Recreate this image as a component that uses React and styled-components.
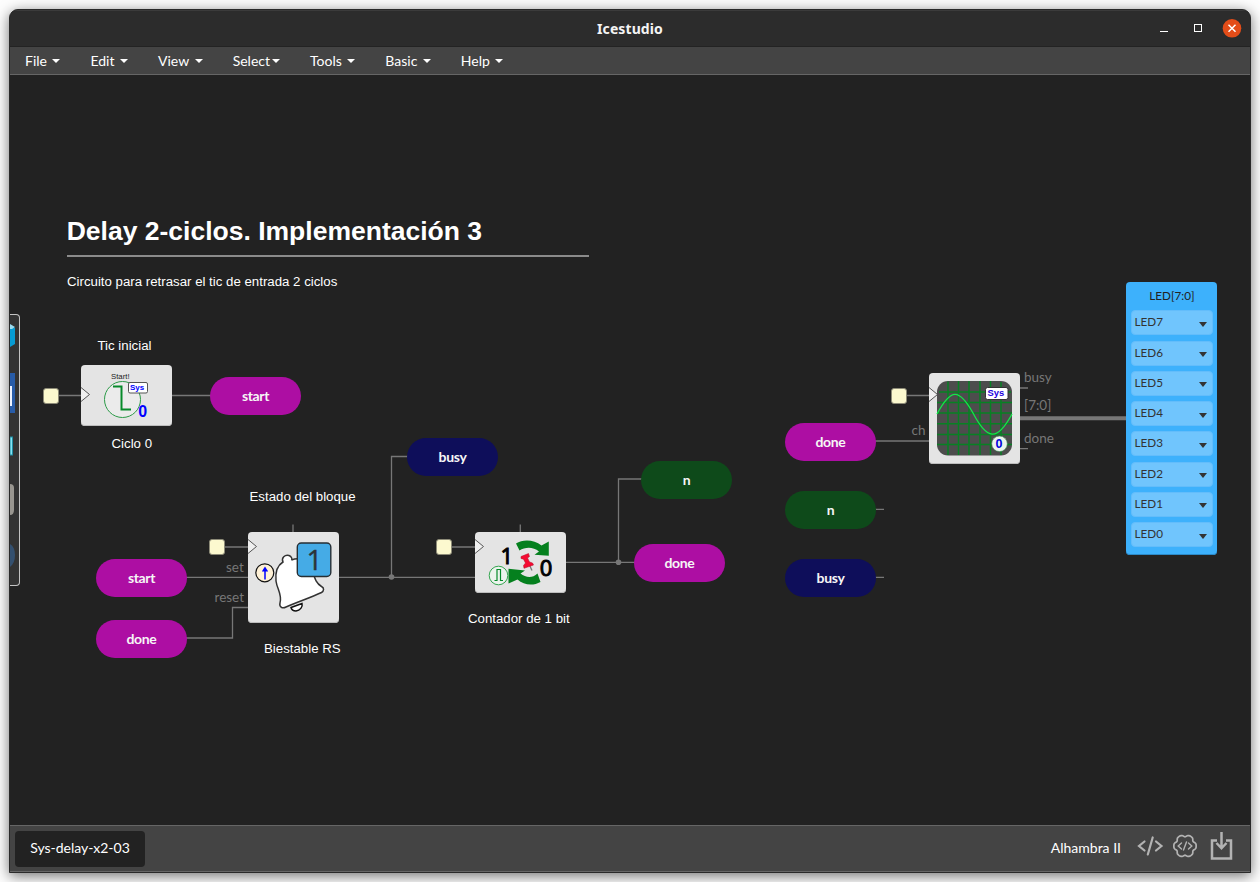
import React from "react";
import styled, { createGlobalStyle } from "styled-components";

const GlobalStyle = createGlobalStyle`
  * { box-sizing: border-box; }
  body { margin: 0; background: #fff; overflow: hidden; font-family: Lato, sans-serif; }
`;

const Desktop = styled.div`
  height: 882px;
  padding: 9px;
  background: #fdfdfd;
`;

const Window = styled.div`
  width: 1242px;
  height: 864px;
  display: flex;
  flex-direction: column;
  border: 1px solid #2a2a2a;
  border-radius: 9px 9px 0 0;
  overflow: hidden;
  background: #222;
  box-shadow: 0 3px 14px rgba(0, 0, 0, 0.55);
`;

const TitleBar = styled.header`
  height: 37px;
  flex: none;
  display: grid;
  grid-template-columns: 1fr auto 1fr;
  align-items: center;
  background: #2c2c2c;
  border-top: 1px solid #3b3b3b;
  border-bottom: 1px solid #232323;
`;

const Title = styled.h1`
  grid-column: 2;
  margin: 0;
  font: 700 14px/20px "Noto Sans", sans-serif;
  letter-spacing: 0.1px;
  color: #f4f4f4;
`;

const WindowControls = styled.div`
  display: flex;
  justify-content: flex-end;
  padding-right: 8px;
`;

const MenuBar = styled.nav`
  height: 28px;
  flex: none;
  display: flex;
  background: #444;
  border-bottom: 1px solid #666;
`;

const MenuItem = styled.div`
  display: flex;
  align-items: center;
  padding: 0 15px;
  font-size: 14px;
  color: #fff;
`;

const Caret = styled.span`
  margin-top: 1px;
  margin-left: ${(p) => (p.$tight ? 2 : 5.5)}px;
  border-top: 4px solid #fff;
  border-left: 4px solid transparent;
  border-right: 4px solid transparent;
`;

const Canvas = styled.main`
  flex: 1;
  position: relative;
  overflow: hidden;
  background: #222;
`;

const Scene = styled.div`
  position: absolute;
  left: -10px;
  top: -75px;
  width: 1260px;
  height: 882px;
`;

const Wires = styled.svg`
  position: absolute;
  left: 0;
  top: 0;
`;

const Placed = styled.div`
  position: absolute;
  left: ${(p) => p.$x}px;
  top: ${(p) => p.$y}px;
`;

const Heading = styled(Placed)`
  width: 522px;
  height: 43px;
  border-bottom: 2px solid #8b8b8b;
  font: 700 26.5px/34px "Liberation Sans", sans-serif;
  color: #fff;
  white-space: nowrap;
`;

const Note = styled(Placed)`
  font: 13.25px/16px "Liberation Sans", sans-serif;
  color: #fff;
  white-space: nowrap;
`;

const PILL_COLORS = { fuchsia: "#ad0ea3", navy: "#0e0e5a", green: "#0e4a1a" };

const Pill = styled(Placed)`
  width: 91px;
  height: 38px;
  display: flex;
  align-items: center;
  justify-content: center;
  padding-bottom: 2px;
  border-radius: 19px;
  background: ${(p) => PILL_COLORS[p.$color]};
  color: #f6f6f6;
  font-size: 14px;
  font-weight: 700;
  letter-spacing: -0.35px;
`;

const ClockSource = styled(Placed)`
  width: 16px;
  height: 16px;
  border: 1px solid #8d8b78;
  border-radius: 3px;
  background: #fcf9cf;
`;

const Block = styled(Placed)`
  width: 91px;
  height: ${(p) => p.$h}px;
  border-radius: 4px;
  background: #e4e4e4;
  box-shadow: inset 0 -1px 0 #bdbdbd;
  overflow: hidden;
  svg { display: block; }
`;

const PortLabel = styled(Placed)`
  font-size: 13.5px;
  line-height: 16px;
  color: #777;
  white-space: nowrap;
`;

const LedPanel = styled(Placed)`
  width: 91px;
  height: 272.5px;
  display: flex;
  flex-direction: column;
  gap: 5.25px;
  padding: 0 4px 0 5px;
  border-radius: 4px;
  background: #3db1fc;
  box-shadow: inset 0 -1px 0 #2c8ac8;
  color: #333;
`;

const LedTitle = styled.div`
  height: 23px;
  line-height: 27px;
  font-size: 11.7px;
  text-align: center;
  color: #222;
`;

const LedSelect = styled.div`
  height: 25px;
  flex: none;
  display: flex;
  justify-content: space-between;
  padding: 0 5.5px 0 2.5px;
  border: 1px solid #63bdfb;
  border-radius: 4px;
  background: #70c5fd;
  font-size: 11.7px;
  line-height: 20.6px;
`;

const SelectArrow = styled.span`
  margin-top: 10.6px;
  height: 0;
  border-top: 5px solid #333;
  border-left: 4px solid transparent;
  border-right: 4px solid transparent;
`;

const Toolbox = styled(Placed)`
  width: 20px;
  height: 272px;
  display: flex;
  flex-direction: column;
  align-items: flex-start;
  border: 1px solid #c4c4c4;
  border-left: 0;
  border-radius: 0 4px 4px 0;
  background: #333;
`;

const Footer = styled.footer`
  height: 47px;
  flex: none;
  display: flex;
  align-items: center;
  justify-content: space-between;
  padding: 0 17px 0 5px;
  border-top: 1px solid #666;
  border-bottom: 1px solid #666;
  background: #444;
  color: #fff;
  font-size: 14px;
`;

const ProjectTab = styled.div`
  width: 130px;
  height: 36px;
  line-height: 34px;
  text-align: center;
  border-radius: 4px;
  background: #222;
`;

const FooterTools = styled.div`
  display: flex;
  align-items: center;
  padding-bottom: 3px;
`;

const BoardName = styled.span`
  margin-right: 16px;
  padding-top: 1px;
`;

const MENUS = ["File", "Edit", "View", "Select", "Tools", "Basic", "Help"];
const LEDS = [7, 6, 5, 4, 3, 2, 1, 0];

const PILLS = [
  [210, 377, "start", "fuchsia"],
  [407, 438, "busy", "navy"],
  [641, 461, "n", "green"],
  [634, 544, "done", "fuchsia"],
  [96, 559, "start", "fuchsia"],
  [96, 620, "done", "fuchsia"],
  [785, 423, "done", "fuchsia"],
  [785, 491, "n", "green"],
  [785, 559, "busy", "navy"],
];

const NOTES = [
  [67, 274, "Circuito para retrasar el tic de entrada 2 ciclos"],
  [97.5, 338, "Tic inicial"],
  [111.5, 436, "Ciclo 0"],
  [249.5, 489, "Estado del bloque"],
  [264, 641, "Biestable RS"],
  [468, 611, "Contador de 1 bit"],
];

const PORTS = [
  [226, 559, "set"],
  [214.5, 589, "reset"],
  [911.5, 422, "ch"],
  [1024, 369, "busy"],
  [1024, 397, "[7:0]"],
  [1024, 430, "done"],
];

const CLOCKS = [[42.6, 387.6], [209, 539], [436, 539], [891, 387.6]];

const ClockNotch = ({ y }) => (
  <path d={`M0 ${y - 7}L8.5 ${y}L0 ${y + 7}`} fill="#f0f0f0" stroke="#555" strokeWidth="1" />
);

const SANS = "Liberation Sans, sans-serif";

const TicIcon = () => (
  <svg width="91" height="61">
    <ClockNotch y={29.5} />
    <circle cx="41.5" cy="34.5" r="18" fill="#ebebeb" stroke="#2c9a48" strokeWidth="1" />
    <path d="M32 21.5H40.5V44.5H50" fill="none" stroke="#068a2a" strokeWidth="2" />
    <text x="30" y="14" fontFamily={SANS} fontSize="7.8" fill="#222">Start!</text>
    <rect x="47.5" y="17.5" width="19" height="10.5" rx="1.5" fill="#fff" stroke="#555" />
    <text x="49" y="25.3" fontFamily={SANS} fontWeight="700" fontSize="8" fill="#00f">Sys</text>
    <text x="57.3" y="51.5" fontFamily={SANS} fontWeight="700" fontSize="16" fill="#00f">0</text>
  </svg>
);

const BellIcon = () => (
  <svg width="91" height="91">
    <ClockNotch y={14.5} />
    <circle cx="16.8" cy="40.8" r="9" fill="#fff1d6" stroke="#111" strokeWidth="1.2" />
    <path d="M17 47.5V37" stroke="#00f" strokeWidth="1.5" />
    <path d="M13.8 39.5L17 34.5L20.2 39.5Z" fill="#00f" />
    <path d="M35 30C33 25.5 37 22.5 41 23.5C43.5 24.5 44.5 27 43.5 28C52 25 60 28 64 38C67 47 68 51 73.5 54.5C76.5 56 76 59 73.5 60.5C62 66 49 70 38 75C34 77 31 74.5 32 71C34.5 63 29 57 28 49C27 39 30 33 35 30Z" fill="#fff" stroke="#333" strokeWidth="1.5" />
    <path d="M43 75.5L54 71.5C55 75 52 78.5 48 79C45.5 79 43.5 77.5 43 75.5Z" fill="#fff" stroke="#111" strokeWidth="1.5" />
    <rect x="49.3" y="11" width="33.5" height="33.5" rx="4" fill="#45abe6" stroke="#262e33" strokeWidth="1.4" />
    <text x="66.5" y="37.5" textAnchor="middle" fontFamily="Open Sans, sans-serif" fontSize="28" fill="#2c3338" stroke="#2c3338" strokeWidth=".4">1</text>
  </svg>
);

const CounterIcon = () => (
  <svg width="91" height="61">
    <ClockNotch y={14.5} />
    <path d="M41 11.5C48 7 59 7.5 66.5 13.5L73.8 9.5V23.8L59.5 22.8L64 19.5C58 14.5 50 15 44.5 18.5Z" fill="#05801e" />
    <path d="M65.5 50C58.5 54 49 53.5 42.5 47.5L33.5 51.5V36.8L50 38.6L45.5 41.5C51 46 57.5 46.3 62.5 41.5Z" fill="#05801e" />
    <circle cx="23.5" cy="43.5" r="9.3" fill="#edf3ee" stroke="#34a650" strokeWidth="1" />
    <path d="M19.5 48.5H22V37.5H25.5V48.5H28" fill="none" stroke="#068a2a" strokeWidth="1.2" />
    <path d="M53.5 31L57 38.5" stroke="#777" strokeWidth="1.3" />
    <path d="M46 24.5L53.5 21.5L54.5 24.5L52.5 26L54.5 30L57.5 31L58.5 33L49 36.3L48.5 33.5L50.5 31L48.5 27.2L46 26.5Z" fill="#f50a32" stroke="#b20a24" strokeWidth=".5" />
    <text x="31.8" y="32" textAnchor="middle" fontFamily="Noto Sans, sans-serif" fontSize="22" fill="#000" stroke="#000" strokeWidth=".9">1</text>
    <text x="71" y="43.5" textAnchor="middle" fontFamily="Noto Sans, sans-serif" fontSize="22" fill="#000" stroke="#000" strokeWidth=".9">0</text>
  </svg>
);

const ScopeIcon = () => (
  <svg width="91" height="91">
    <ClockNotch y={21.5} />
    <rect x="8" y="8" width="75" height="74.5" rx="11" fill="#4d4d4d" />
    <path
      d="M19 8.5V82M29.5 8V82M40 8V82M51 8V82M61.5 8V82M72 9V82M10 19H82M8 29.5H83M8 40H83M8 50.7H83M8 61.5H83M8 71.5H83"
      fill="none" stroke="#078123" strokeWidth="1.5"
    />
    <path d="M8 41C22 15 30 15 44 40C58 67 68 69 83 41" fill="none" stroke="#12e948" strokeWidth="1.3" />
    <rect x="56.5" y="14.5" width="22.5" height="12" rx="2" fill="#fff" stroke="#333" />
    <text x="58.5" y="23" fontFamily={SANS} fontWeight="700" fontSize="9.4" fill="#20d">Sys</text>
    <circle cx="70.5" cy="70.8" r="7.8" fill="#ebf5ed" stroke="#3a8750" strokeWidth=".6" />
    <text x="70" y="75.3" textAnchor="middle" fontFamily={SANS} fontWeight="700" fontSize="12.5" fill="#00d">0</text>
  </svg>
);

const PaletteIcons = () => (
  <svg width="16" height="270">
    <rect width="16" height="270" fill="#333" />
    <path d="M10 11L15 13V29L10 32Z" fill="#079bd2" />
    <path d="M10 9L15 12L12 14H10Z" fill="#9bdcf0" />
    <rect x="10" y="58" width="5" height="40" fill="#285ca8" />
    <rect x="10" y="71" width="2" height="20" fill="#eef3ff" />
    <rect x="10" y="122" width="2.5" height="18" fill="#85e2f2" stroke="#208da2" />
    <path d="M10 169Q14 169 14 173V195Q14 200 10 200Z" fill="#999690" />
    <path d="M10 229Q15 232 15 240Q15 248 10 252Z" fill="#34506f" />
  </svg>
);

/* Six-lobed gear outline, sampled around its centre. */
const GEAR = `M${Array.from({ length: 72 }, (_, i) => {
  const angle = (i * Math.PI) / 36;
  const radius = 10.5 + 0.95 * Math.cos(6 * angle) - 0.3 * Math.cos(12 * angle);
  return `${(radius * Math.cos(angle)).toFixed(2)} ${(radius * Math.sin(angle)).toFixed(2)}`;
}).join("L")}Z`;

const FooterIcons = () => (
  <svg width="96" height="34" fill="none" stroke="#b3b3b3">
    <path d="M7.5 11.5L2 16L7.5 20.5M19 11.5L24.5 16L19 20.5M15.7 7.5L10.8 24.5" strokeWidth="2.2" strokeLinecap="round" />
    <g transform="translate(48 16)">
      <path d={GEAR} strokeWidth="1.7" />
      <path d="M-3.5 -3L-6.8 0L-3.5 3M3.5 -3L6.8 0L3.5 3M1.5 -4L-1.5 4" strokeWidth="1.4" strokeLinecap="round" />
    </g>
    <path d="M80 10.5H75V28.5H94V10.5H89M84.5 2V18M79.5 13L84.5 18.3L89.5 13" strokeWidth="2.5" />
  </svg>
);

export default function App() {
  return (
    <>
      <GlobalStyle />
      <Desktop>
        <Window>
          <TitleBar>
            <Title>Icestudio</Title>
            <WindowControls>
              <svg width="84" height="20" fill="none" stroke="#fff">
                <path d="M2 12.5H10" />
                <rect x="36.5" y="5.5" width="7" height="7" />
                <circle cx="74" cy="9.3" r="9.3" fill="#e34d19" stroke="none" />
                <path d="M70.5 5.8L77.5 12.8M77.5 5.8L70.5 12.8" strokeWidth="1.5" />
              </svg>
            </WindowControls>
          </TitleBar>
          <MenuBar>
            {MENUS.map((name) => (
              <MenuItem key={name}>
                {name}
                <Caret $tight={name === "Select"} />
              </MenuItem>
            ))}
          </MenuBar>
          <Canvas>
            <Scene>
              <Wires width="1260" height="882" fill="none" stroke="#777" strokeWidth="1.3">
                <path d="M58 395.5H82M171 395.5H211M224 547H249M451 547H476M906 395.5H930" />
                <path d="M186 577.3H249M186 638H232.5V607.5H249M338 577.3H476M391.5 577V456.5H408" />
                <path d="M565 562.3H635M618.5 562V479H642M293 524.5V533M520.3 524.5V533" />
                <path d="M875 441H930M875 509.3H884M875 577.3H884M1019 388H1028M1019 448.6H1028" />
                <path d="M1019 418.3H1127" strokeWidth="4" />
                <circle cx="391.5" cy="577" r="2.8" fill="#777" stroke="none" />
                <circle cx="618.5" cy="562.3" r="2.8" fill="#777" stroke="none" />
              </Wires>
              <Heading $x={66.7} $y={214}>Delay 2-ciclos. Implementación 3</Heading>
              {NOTES.map(([x, y, text]) => (
                <Note key={text} $x={x} $y={y}>{text}</Note>
              ))}
              {CLOCKS.map(([x, y]) => (
                <ClockSource key={x} $x={x} $y={y} />
              ))}
              {PILLS.map(([x, y, text, color]) => (
                <Pill key={`${x}-${y}`} $x={x} $y={y} $color={color}>{text}</Pill>
              ))}
              {PORTS.map(([x, y, text]) => (
                <PortLabel key={`${x}-${y}`} $x={x} $y={y}>{text}</PortLabel>
              ))}
              <Block $x={81} $y={365} $h={61}><TicIcon /></Block>
              <Block $x={248} $y={532} $h={91}><BellIcon /></Block>
              <Block $x={475} $y={532} $h={61}><CounterIcon /></Block>
              <Block $x={929} $y={373} $h={91}><ScopeIcon /></Block>
              <LedPanel $x={1126} $y={282}>
                <LedTitle>LED[7:0]</LedTitle>
                {LEDS.map((n) => (
                  <LedSelect key={n}>
                    LED{n}
                    <SelectArrow />
                  </LedSelect>
                ))}
              </LedPanel>
              <Toolbox $x={0} $y={314}><PaletteIcons /></Toolbox>
            </Scene>
          </Canvas>
          <Footer>
            <ProjectTab>Sys-delay-x2-03</ProjectTab>
            <FooterTools>
              <BoardName>Alhambra II</BoardName>
              <FooterIcons />
            </FooterTools>
          </Footer>
        </Window>
      </Desktop>
    </>
  );
}
